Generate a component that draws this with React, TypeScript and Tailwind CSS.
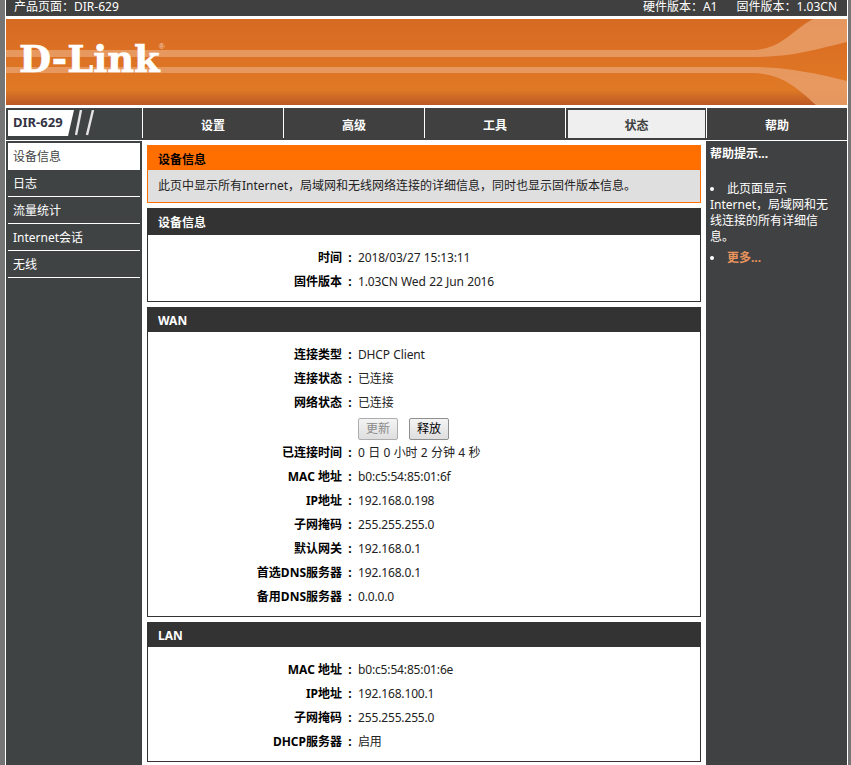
const FONT = "font-['Noto_Sans','Noto_Sans_CJK_SC',sans-serif]";

type Row = { label: string; value: string };

const deviceRows: Row[] = [
  { label: "时间", value: "2018/03/27 15:13:11" },
  { label: "固件版本", value: "1.03CN Wed 22 Jun 2016" },
];

const wanTop: Row[] = [
  { label: "连接类型", value: "DHCP Client" },
  { label: "连接状态", value: "已连接" },
  { label: "网络状态", value: "已连接" },
];

const wanBottom: Row[] = [
  { label: "已连接时间", value: "0 日 0 小时 2 分钟 4 秒" },
  { label: "MAC 地址", value: "b0:c5:54:85:01:6f" },
  { label: "IP地址", value: "192.168.0.198" },
  { label: "子网掩码", value: "255.255.255.0" },
  { label: "默认网关", value: "192.168.0.1" },
  { label: "首选DNS服务器", value: "192.168.0.1" },
  { label: "备用DNS服务器", value: "0.0.0.0" },
];

const lanRows: Row[] = [
  { label: "MAC 地址", value: "b0:c5:54:85:01:6e" },
  { label: "IP地址", value: "192.168.100.1" },
  { label: "子网掩码", value: "255.255.255.0" },
  { label: "DHCP服务器", value: "启用" },
];

const tabs = ["设置", "高级", "工具", "状态", "帮助"];
const menu = ["日志", "流量统计", "Internet会话", "无线"];

function InfoRow({ label, value }: Row) {
  return (
    <div className="flex h-6 items-center">
      <div className="w-[194px] text-right font-bold text-black">{label}</div>
      <div className="w-4 text-center font-bold text-black">:</div>
      <div className="tracking-[-0.15px] text-[#222] [word-spacing:0.5px]">{value}</div>
    </div>
  );
}

function Section({ title, className, headClass, children }: { title: string; className: string; headClass: string; children: React.ReactNode }) {
  return (
    <section className={`mt-[5px] flex flex-col border border-[#333] ${className}`}>
      <h2 className={`flex shrink-0 items-center bg-[#333] pl-[10px] font-bold text-white ${headClass}`}>{title}</h2>
      {children}
    </section>
  );
}

function Banner() {
  return (
    <div className="relative h-[86px] overflow-hidden bg-[linear-gradient(180deg,#d76a22_0%,#dd7224_45%,#df7925_82%,#bb5826_100%)]">
      <svg className="absolute inset-0" width="841" height="86" viewBox="0 0 841 86">
        <path
          d="M0 31H745C775 31 785 12 807 0H841V23C810 30 790 38 745 38H0Z"
          fill="#e89c66"
          opacity="0.9"
        />
        <path
          d="M0 48H745C780 48 810 54 841 62V86H810C790 68 775 54 745 54H0Z"
          fill="#e89c66"
          opacity="0.9"
        />
      </svg>
      <div className="relative flex h-full items-start pl-[13px] pt-[18px] font-['DejaVu_Serif',serif] text-[37px] font-bold leading-[44px] text-white [-webkit-text-stroke:0.6px_white]">
        D-Link
        <span className="-ml-px mt-[5px] font-['Liberation_Sans',sans-serif] text-[8px] font-normal leading-[10px] text-[#f3d9c4] [-webkit-text-stroke:0]">®</span>
      </div>
    </div>
  );
}

function Nav() {
  return (
    <nav className="mt-[3px] flex h-8 bg-[#404040]">
      <div className="relative h-full w-[136px] shrink-0 bg-[#404344] pl-[2px] pt-[2px]">
        <div className="flex h-[26px] w-[66px] items-center bg-white pl-[5px] text-[13px] font-bold text-[#333344] [clip-path:polygon(0_0,100%_0,91%_100%,0_100%)]">
          DIR-629
        </div>
        <svg className="absolute left-[69px] top-[2px]" width="22" height="26" viewBox="0 0 22 26">
          <path d="M6 0L1 25M18 0L12 25" stroke="#e4e4e4" strokeWidth="2.4" fill="none" />
        </svg>
      </div>
      {tabs.map((tab) => (
        <div key={tab} className="flex h-[30px] w-[141px] border-l border-white">
          {tab === "状态" ? (
            <div className="ml-[2px] mr-px mt-[2px] flex h-[28px] flex-1 items-center justify-center bg-[#efefef] pt-[3px] font-bold text-[#404040]">
              {tab}
            </div>
          ) : (
            <div className="flex flex-1 items-center justify-center pt-[5px] font-bold text-white">{tab}</div>
          )}
        </div>
      ))}
    </nav>
  );
}

function Sidebar() {
  return (
    <aside className="w-[136px] shrink-0 bg-[#404344] px-[2px] pt-[2px]">
      <div className="flex h-[27px] items-center bg-white pl-[5px] text-[#444]">设备信息</div>
      {menu.map((item) => (
        <div key={item} className="flex h-[27px] items-center border-b border-white pl-[5px] pt-[2px] text-white">
          {item}
        </div>
      ))}
    </aside>
  );
}

function Help() {
  return (
    <aside className="w-[141px] shrink-0 bg-[#404142] pl-1 pr-[10px] pt-[5px] leading-4 text-white">
      <h3 className="font-bold">帮助提示...</h3>
      <ul className="mt-[19px] list-inside list-disc">
        <li>此页面显示Internet，局域网和无线连接的所有详细信息。</li>
        <li className="mt-[5px] font-bold text-[#e8935c] marker:text-white">更多...</li>
      </ul>
    </aside>
  );
}

export default function App() {
  return (
    <div className={`flex h-[765px] w-[851px] overflow-hidden bg-[#757575] pl-[5px] text-xs ${FONT}`}>
      <div className="flex h-full w-[843px] flex-col bg-white px-px">
        <header className="flex h-4 shrink-0 items-start justify-between bg-[#404040] pl-2 pr-[10px] leading-[14px] text-white">
          <span>产品页面：DIR-629</span>
          <span className="flex gap-[19px]">
            <span>硬件版本：A1</span>
            <span>固件版本：1.03CN</span>
          </span>
        </header>
        <div className="mt-[3px] shrink-0">
          <Banner />
        </div>
        <div className="shrink-0">
          <Nav />
        </div>
        <div className="mt-px flex min-h-0 flex-1">
          <Sidebar />
          <main className="mx-[5px] w-[554px] shrink-0 pt-1">
            <div className="border border-[#ff6f00] bg-[#dfdfdf]">
              <h1 className="flex h-6 items-center bg-[#ff6f00] pl-[10px] pt-1 font-bold text-black">设备信息</h1>
              <p className="flex h-[32px] items-center pl-[10px] text-[#222]">
                此页中显示所有Internet，局域网和无线网络连接的详细信息，同时也显示固件版本信息。
              </p>
            </div>
            <Section title="设备信息" className="h-[94px]" headClass="h-[26px] pt-[2px]">
              <div className="pt-[11px]">
                {deviceRows.map((r) => (
                  <InfoRow key={r.label} {...r} />
                ))}
              </div>
            </Section>
            <Section title="WAN" className="h-[310px]" headClass="h-6 pt-[2px]">
              <div className="pt-[11px]">
                {wanTop.map((r) => (
                  <InfoRow key={r.label} {...r} />
                ))}
                <div className="flex h-[26px] items-end gap-[11px] pb-px pl-[210px]">
                  <button className="h-[22px] w-10 rounded-[2px] border border-[#adadad] bg-[linear-gradient(180deg,#f4f4f4,#dedede)] text-[#8a8a8a]">更新</button>
                  <button className="h-[22px] w-10 rounded-[2px] border border-[#8f8f8f] bg-[linear-gradient(180deg,#f4f4f4,#dedede)] text-black">释放</button>
                </div>
                {wanBottom.map((r) => (
                  <InfoRow key={r.label} {...r} />
                ))}
              </div>
            </Section>
            <Section title="LAN" className="h-[140px]" headClass="h-6 pt-[2px]">
              <div className="pt-[11px]">
                {lanRows.map((r) => (
                  <InfoRow key={r.label} {...r} />
                ))}
              </div>
            </Section>
          </main>
          <Help />
        </div>
      </div>
    </div>
  );
}
